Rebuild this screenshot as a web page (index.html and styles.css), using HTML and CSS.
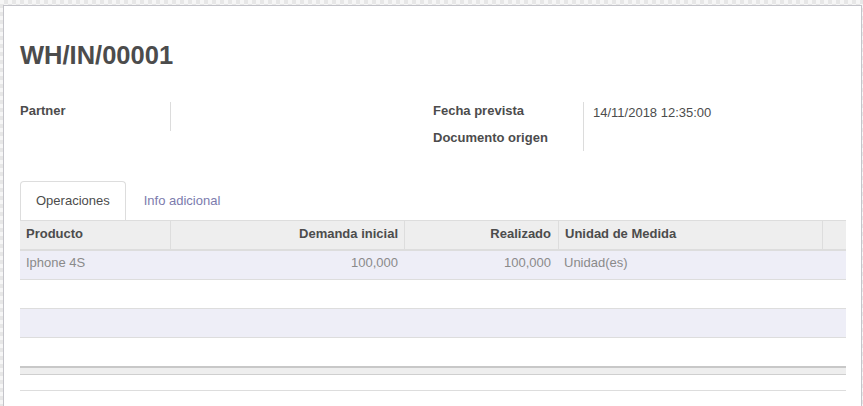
FILE: index.html
```html
<!DOCTYPE html>
<html lang="es">
<head>
<meta charset="utf-8">
<title>WH/IN/00001</title>
<link rel="stylesheet" href="styles.css">
</head>
<body>
<div class="sheet">
  <h1 class="title">WH/IN/00001</h1>

  <div class="groups">
    <div class="group">
      <div class="grow grow-partner">
        <div class="glabel">Partner</div>
        <div class="gvalue"></div>
      </div>
    </div>
    <div class="group">
      <div class="grow grow-date">
        <div class="glabel">Fecha prevista</div>
        <div class="gvalue date">14/11/2018 12:35:00</div>
      </div>
      <div class="grow grow-origin">
        <div class="glabel">Documento origen</div>
        <div class="gvalue"></div>
      </div>
    </div>
  </div>

  <div class="tabs">
    <div class="tab active">Operaciones</div>
    <div class="tab">Info adicional</div>
  </div>

  <div class="list">
    <div class="lrow lhead">
      <div class="cell">Producto</div>
      <div class="cell num sep">Demanda inicial</div>
      <div class="cell num sep">Realizado</div>
      <div class="cell sep">Unidad de Medida</div>
      <div class="cell sep"></div>
    </div>
    <div class="lrow ldata odd">
      <div class="cell">Iphone 4S</div>
      <div class="cell num">100,000</div>
      <div class="cell num">100,000</div>
      <div class="cell">Unidad(es)</div>
      <div class="cell"></div>
    </div>
    <div class="lrow ldata"></div>
    <div class="lrow ldata odd"></div>
    <div class="lrow ldata last"></div>
    <div class="lfoot"></div>
  </div>
  <div class="after"></div>
</div>
</body>
</html>
```
FILE: styles.css
```css
* { box-sizing: border-box; }

html, body {
  margin: 0;
  height: 406px;
  overflow: hidden;
}

body {
  background-color: #f2f2f2;
  background-image: repeating-conic-gradient(#e7e7e7 0 25%, #f6f6f6 0 50%);
  background-size: 8px 8px;
  font-family: "Liberation Sans", Arial, sans-serif;
  font-size: 13px;
  color: #4c4c4c;
}

.sheet {
  margin: 5px 1px 0 3px;
  background: #fff;
  border: 1px solid #c4c4ca;
  border-bottom: none;
  padding: 35px 15px 0 16px;
  height: 420px;
}

.title {
  margin: 0;
  font-size: 25.5px;
  line-height: 29px;
  font-weight: bold;
  color: #4c4c4c;
}

.groups {
  display: flex;
  margin-top: 32px;
}

.group {
  width: 413px;
}

.grow {
  display: flex;
}

.grow-partner { height: 29px; }
.grow-date { height: 27px; }
.grow-origin { height: 22px; }

.glabel {
  width: 151px;
  border-right: 1px solid #dcdcdc;
  font-weight: bold;
  line-height: 15px;
  padding-top: 1px;
}

.grow-partner .glabel { padding-top: 1px; }

.gvalue {
  flex: 1;
  padding-left: 9px;
  line-height: 15px;
}

.gvalue.date { padding-top: 3px; }

.tabs {
  display: flex;
  margin-top: 30px;
  height: 39px;
}

.tab {
  padding: 9px 15px 9px;
  line-height: 20px;
  margin-right: 2px;
  color: #7c7bad;
  border: 1px solid transparent;
  border-bottom: none;
  border-radius: 4px 4px 0 0;
}

.tab.active {
  color: #4c4c4c;
  border-color: #dddddd;
  background: #fff;
}

.lrow {
  display: grid;
  grid-template-columns: 150px 234px 154px 264px 24px;
}

.cell {
  line-height: 20px;
  padding: 2px 6px 6px;
  white-space: nowrap;
  overflow: hidden;
}

.num { text-align: right; }

.lhead {
  background: #eeeeee;
  border-top: 1px solid #dddddd;
  border-bottom: 2px solid #dddddd;
}

.lhead .cell {
  font-weight: bold;
  padding: 3px 6px 5px;
  height: 28px;
}

.lhead .cell.sep { border-left: 1px solid #dddddd; }
.lhead .cell.num { padding-right: 6px; }
.lhead .cell:nth-child(3) { padding-right: 7px; }

.ldata {
  height: 29px;
  border-bottom: 1px solid #dddddd;
  color: #8a8a8a;
}

.ldata .cell:nth-child(3) { padding-right: 7px; }

.ldata.odd { background: #eeeef7; }

.ldata.last {
  height: 28px;
  border-bottom: none;
}

.lfoot {
  height: 9px;
  background: #eeeeee;
  border-top: 2px solid #c8c8c8;
  border-bottom: 1px solid #cfcfcf;
}

.after {
  height: 16px;
  border-bottom: 1px solid #dddddd;
}
```
